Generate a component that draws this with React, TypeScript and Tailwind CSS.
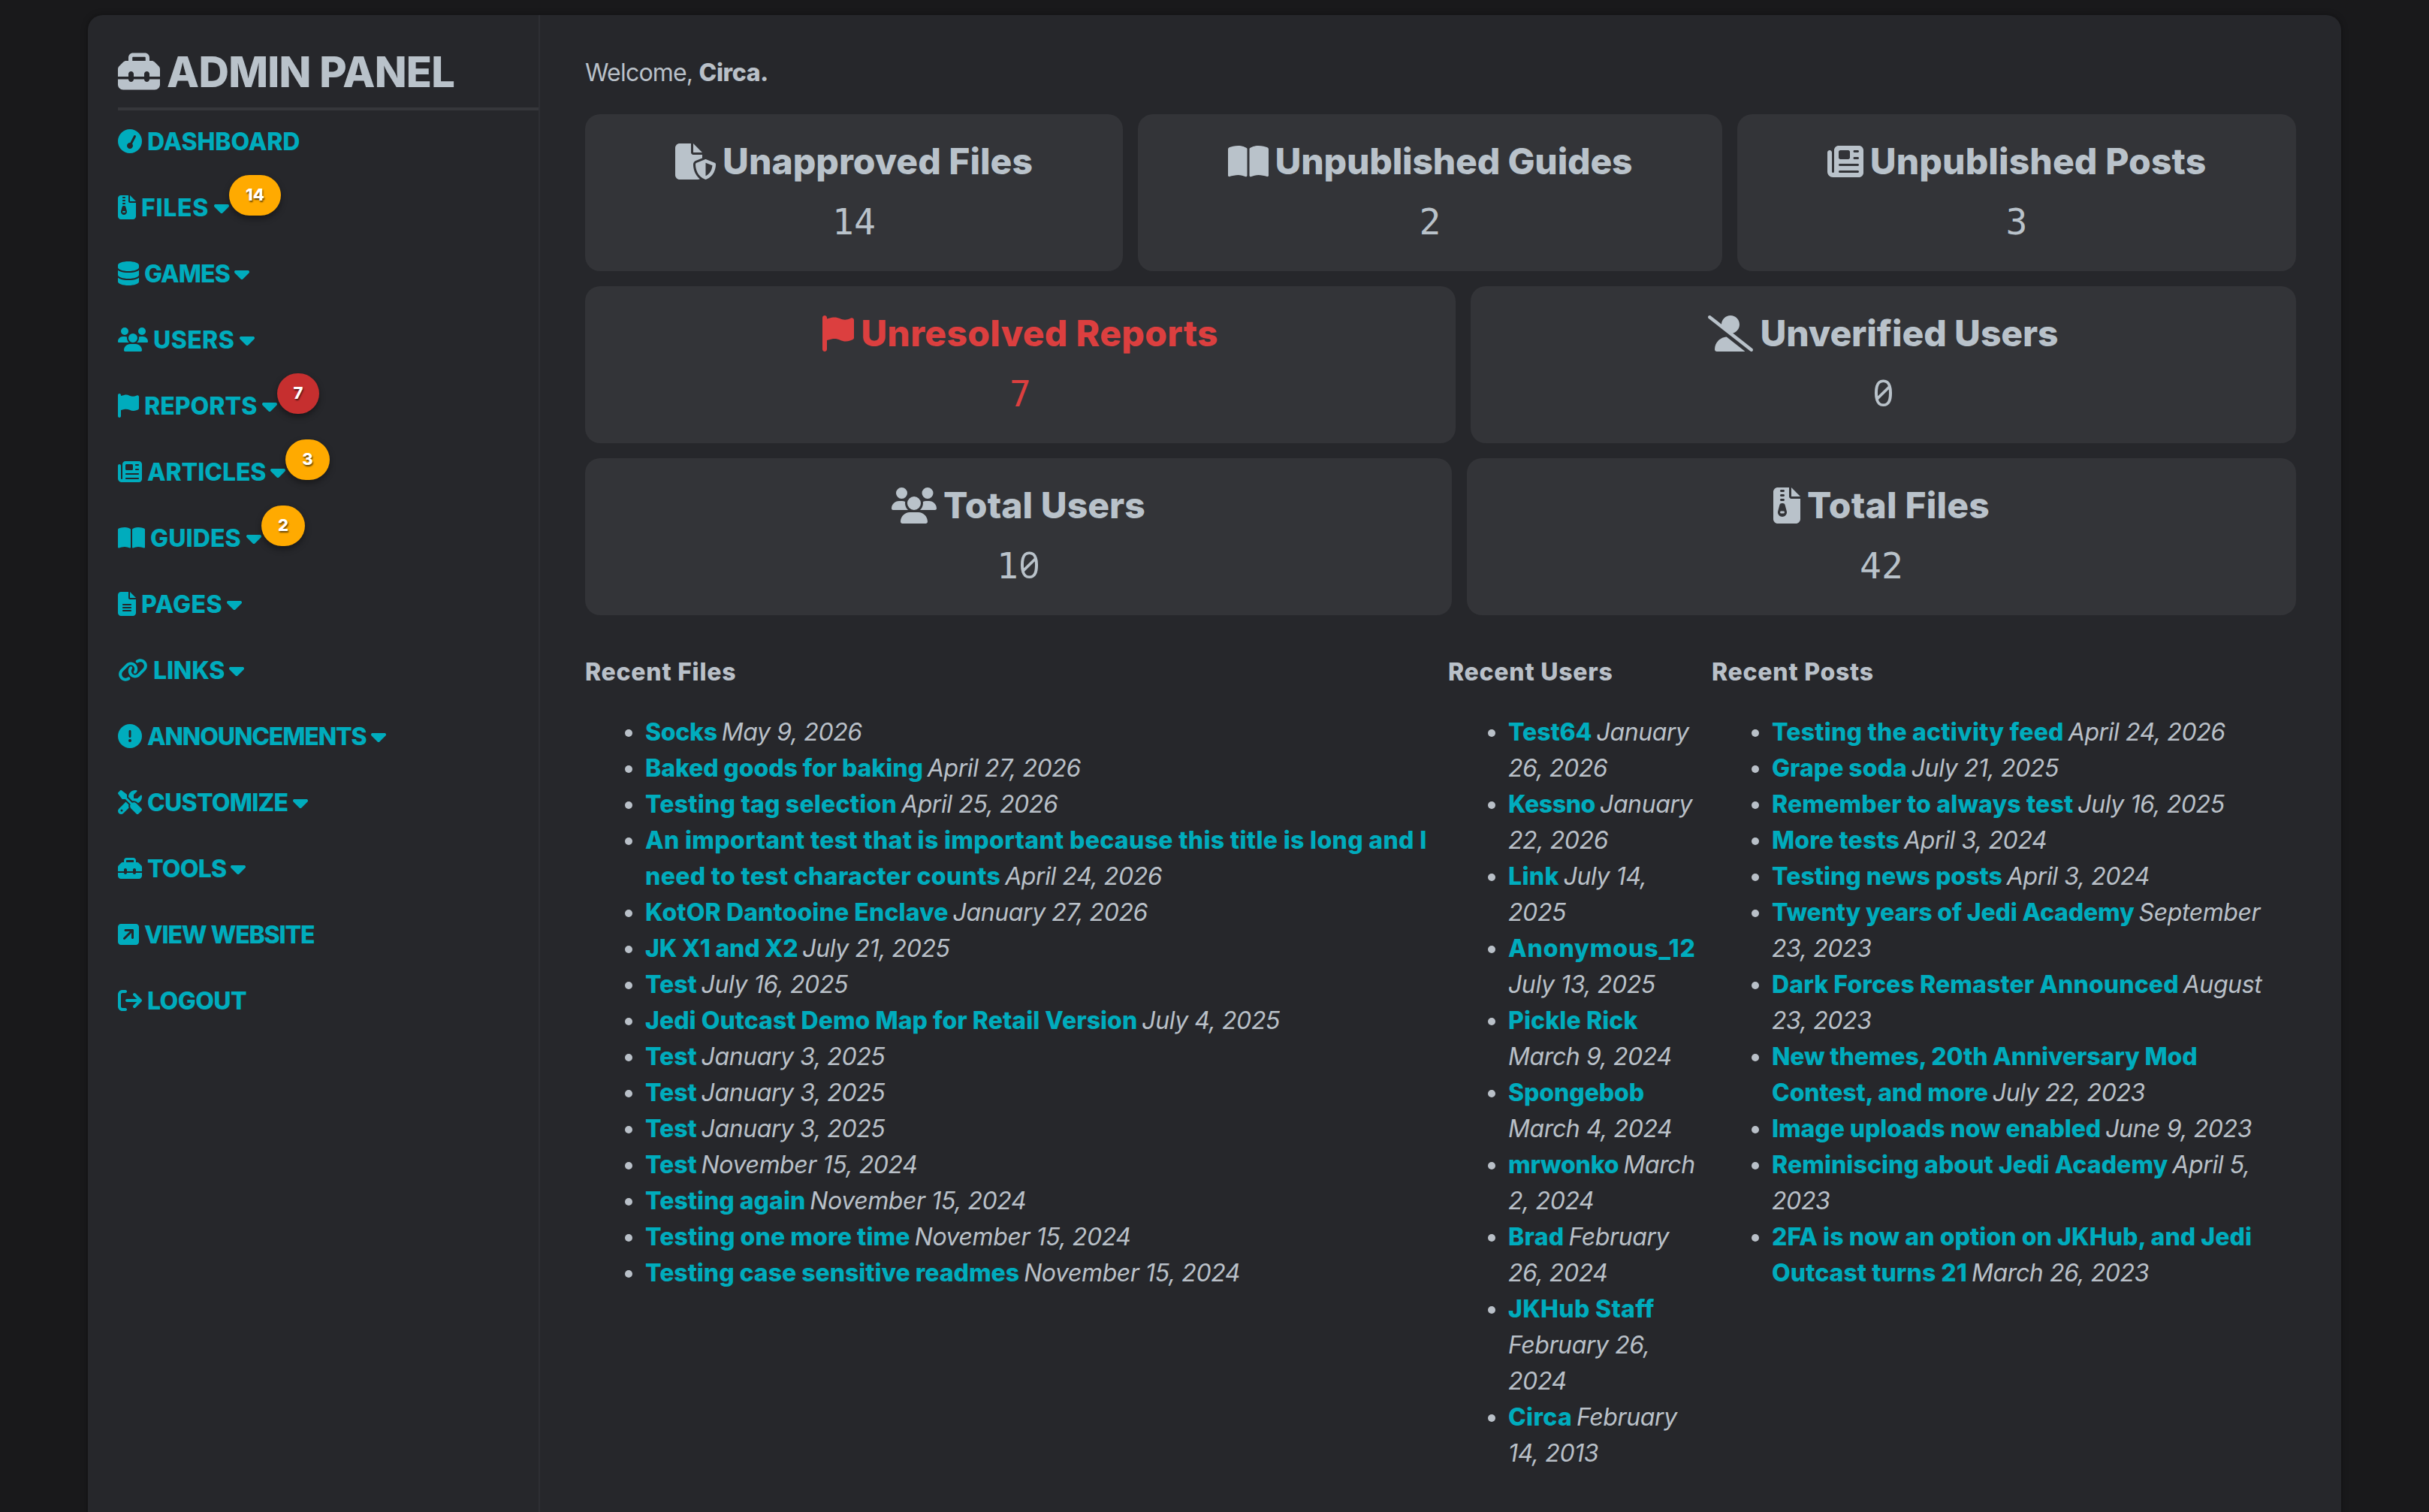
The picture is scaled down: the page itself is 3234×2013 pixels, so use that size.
import type { IconType } from "react-icons";
import clsx from "clsx";
import {
  FaArrowRightFromBracket,
  FaBookOpen,
  FaCaretDown,
  FaCircleExclamation,
  FaDatabase,
  FaFileLines,
  FaFileShield,
  FaFileZipper,
  FaFlag,
  FaGaugeSimpleHigh,
  FaLink,
  FaNewspaper,
  FaScrewdriverWrench,
  FaSquareArrowUpRight,
  FaToolbox,
  FaUserSlash,
  FaUsers,
} from "react-icons/fa6";

/** An icon and the class for its natural width relative to its height. */
type Glyph = [IconType, string];

type NavItem = {
  label: string;
  glyph: Glyph;
  /** Label width and letter spacing. */
  fit: string;
  menu?: boolean;
  badge?: { count: number; style: string };
};

const NAV: NavItem[] = [
  { label: "Dashboard", glyph: [FaGaugeSimpleHigh, "w-[1em]"], fit: "w-[208px] tracking-[-0.1px]" },
  { label: "Files", glyph: [FaFileZipper, "w-[0.75em]"], fit: "w-[92px] tracking-[0.7px]", menu: true, badge: { count: 14, style: "w-[69px] bg-[#ffaa00]" } },
  { label: "Games", glyph: [FaDatabase, "w-[0.875em]"], fit: "w-[115px] tracking-[-0.9px]", menu: true },
  { label: "Users", glyph: [FaUsers, "w-[1.25em]"], fit: "w-[110px] tracking-[0.4px]", menu: true },
  { label: "Reports", glyph: [FaFlag, "w-[0.875em]"], fit: "w-[152px]", menu: true, badge: { count: 7, style: "w-[56px] bg-[#c62f2f]" } },
  { label: "Articles", glyph: [FaNewspaper, "w-[1em]"], fit: "w-[159px] tracking-[-0.1px]", menu: true, badge: { count: 3, style: "w-[59px] bg-[#ffaa00]" } },
  { label: "Guides", glyph: [FaBookOpen, "w-[1.125em]"], fit: "w-[123px] tracking-[0.1px]", menu: true, badge: { count: 2, style: "w-[58px] bg-[#ffaa00]" } },
  { label: "Pages", glyph: [FaFileLines, "w-[0.75em]"], fit: "w-[109px] tracking-[0.4px]", menu: true },
  { label: "Links", glyph: [FaLink, "w-[1.25em]"], fit: "w-[96px] tracking-[-0.2px]", menu: true },
  { label: "Announcements", glyph: [FaCircleExclamation, "w-[1em]"], fit: "w-[293px] tracking-[-1.15px]", menu: true },
  { label: "Customize", glyph: [FaScrewdriverWrench, "w-[1em]"], fit: "w-[189px] tracking-[-0.75px]", menu: true },
  { label: "Tools", glyph: [FaToolbox, "w-[1em]"], fit: "w-[106px] tracking-[-0.8px]", menu: true },
  { label: "View Website", glyph: [FaSquareArrowUpRight, "w-[0.875em]"], fit: "w-[230px] tracking-[-1.15px]" },
  { label: "Logout", glyph: [FaArrowRightFromBracket, "w-[1em]"], fit: "w-[140px] tracking-[-0.6px]" },
];

type Stat = { label: string; value: string; glyph: Glyph; width: string; tracking: string; alert?: boolean };

const STATS: Stat[][] = [
  [
    { label: "Unapproved Files", value: "14", glyph: [FaFileShield, "w-[1.125em]"], width: "w-[716px]", tracking: "tracking-[0px]" },
    { label: "Unpublished Guides", value: "2", glyph: [FaBookOpen, "w-[1.125em]"], width: "w-[778px]", tracking: "tracking-[-0.2px]" },
    { label: "Unpublished Posts", value: "3", glyph: [FaNewspaper, "w-[1em]"], width: "flex-1", tracking: "tracking-[0.1px]" },
  ],
  [
    { label: "Unresolved Reports", value: "7", glyph: [FaFlag, "w-[0.875em]"], width: "w-[1159px]", tracking: "tracking-[0.3px]", alert: true },
    { label: "Unverified Users", value: "0", glyph: [FaUserSlash, "w-[1.25em]"], width: "flex-1", tracking: "tracking-[-0.1px]" },
  ],
  [
    { label: "Total Users", value: "10", glyph: [FaUsers, "w-[1.25em]"], width: "w-[1154px]", tracking: "tracking-[0.05px]" },
    { label: "Total Files", value: "42", glyph: [FaFileZipper, "w-[0.75em]"], width: "flex-1", tracking: "tracking-[0.2px]" },
  ],
];

type Entry = [title: string, date: string, titleTracking?: string];

const FEEDS: { heading: string; width: string; entries: Entry[] }[] = [
  {
    heading: "Recent Files",
    width: "w-[1149px]",
    entries: [
      ["Socks", "May 9, 2026", "tracking-[-0.3px]"],
      ["Baked goods for baking", "April 27, 2026"],
      ["Testing tag selection", "April 25, 2026", "tracking-[0.2px]"],
      [
        "An important test that is important because this title is long and I\nneed to test character counts",
        "April 24, 2026",
        "tracking-[0.32px]",
      ],
      ["KotOR Dantooine Enclave", "January 27, 2026", "tracking-[0.1px]"],
      ["JK X1 and X2", "July 21, 2025", "tracking-[-0.25px]"],
      ["Test", "July 16, 2025"],
      ["Jedi Outcast Demo Map for Retail Version", "July 4, 2025", "tracking-[0.02px]"],
      ["Test", "January 3, 2025"],
      ["Test", "January 3, 2025"],
      ["Test", "January 3, 2025"],
      ["Test", "November 15, 2024"],
      ["Testing again", "November 15, 2024", "tracking-[0px]"],
      ["Testing one more time", "November 15, 2024", "tracking-[0.1px]"],
      ["Testing case sensitive readmes", "November 15, 2024", "tracking-[-0.03px]"],
    ],
  },
  {
    heading: "Recent Users",
    width: "w-[351px]",
    entries: [
      ["Test64", "January\n26, 2026"],
      ["Kessno", "January\n22, 2026", "tracking-[-0.4px]"],
      ["Link", "July 14,\n2025", "tracking-[0.3px]"],
      ["Anonymous_12\n", "July 13, 2025", "tracking-[0.9px]"],
      ["Pickle Rick\n", "March 9, 2024", "tracking-[0.1px]"],
      ["Spongebob\n", "March 4, 2024"],
      ["mrwonko", "March\n2, 2024", "tracking-[-0.2px]"],
      ["Brad", "February\n26, 2024", "tracking-[0.3px]"],
      ["JKHub Staff\n", "February 26,\n2024", "tracking-[0.3px]"],
      ["Circa", "February\n14, 2013", "tracking-[0.3px]"],
    ],
  },
  {
    heading: "Recent Posts",
    width: "w-[778px]",
    entries: [
      ["Testing the activity feed", "April 24, 2026", "tracking-[0.2px]"],
      ["Grape soda", "July 21, 2025", "tracking-[0px]"],
      ["Remember to always test", "July 16, 2025", "tracking-[0.15px]"],
      ["More tests", "April 3, 2024", "tracking-[0.15px]"],
      ["Testing news posts", "April 3, 2024", "tracking-[0px]"],
      ["Twenty years of Jedi Academy", "September\n23, 2023", "tracking-[-0.17px]"],
      ["Dark Forces Remaster Announced", "August\n23, 2023", "tracking-[0.1px]"],
      ["New themes, 20th Anniversary Mod\nContest, and more", "July 22, 2023", "tracking-[-0.15px]"],
      ["Image uploads now enabled", "June 9, 2023"],
      ["Reminiscing about Jedi Academy", "April 5,\n2023", "tracking-[0.05px]"],
      ["2FA is now an option on JKHub, and Jedi\nOutcast turns 21", "March 26, 2023", "tracking-[0.06px]"],
    ],
  },
];

function NavLink({ label, glyph: [Icon, iconWidth], fit, menu, badge }: NavItem) {
  return (
    <li>
      <a href="#" className="flex h-12 items-center text-[#00acbd]">
        <Icon className={clsx("mr-1.5 h-[1em] shrink-0", iconWidth)} />
        <span className={clsx("shrink-0 pt-px pl-px font-extrabold whitespace-nowrap uppercase", fit)}>{label}</span>
        {menu && <FaCaretDown className="ml-1.5 h-[1em] w-[0.625em] shrink-0" />}
        {badge && (
          <span
            className={clsx(
              "relative -top-4 flex h-[54px] shrink-0 items-center justify-center rounded-[27px] pb-0.5 text-[22px] leading-none font-extrabold text-white shadow-[0_4px_8px_rgba(0,0,0,0.4)] [text-shadow:1px_2px_2px_rgba(0,0,0,0.6)]",
              badge.style,
            )}
          >
            {badge.count}
          </span>
        )}
      </a>
    </li>
  );
}

/** Monospaced figure with a slashed zero. */
function Figure({ value }: { value: string }) {
  return (
    <div className="mt-2 h-[72px] text-center font-['DejaVu_Sans_Mono',monospace] text-[48px] leading-[72px]">
      {value.split("").map((digit, i) =>
        digit === "0" ? (
          <span
            key={i}
            className="inline-block w-[29px] text-center font-['Open_Sans',sans-serif] text-[49px] leading-none [font-feature-settings:'zero']"
          >
            0
          </span>
        ) : (
          <span key={i}>{digit}</span>
        ),
      )}
    </div>
  );
}

function StatCard({ label, value, glyph: [Icon, iconWidth], width, tracking, alert }: Stat) {
  return (
    <div className={clsx("h-[209px] rounded-[20px] bg-[#333438] pt-[27px]", width, alert ? "text-[#dc3f3f]" : "text-[#b9c2ca]")}>
      <h2 className={clsx("flex h-[72px] items-center justify-center text-[48px] font-extrabold whitespace-nowrap", tracking)}>
        <Icon className={clsx("mr-[9px] h-[1em] shrink-0", iconWidth)} />
        {label}
      </h2>
      <Figure value={value} />
    </div>
  );
}

export default function App() {
  return (
    <div className="h-[2013px] overflow-hidden bg-[#19191b] pt-5 pr-[117px] pl-[117px] font-['Inter',sans-serif] text-[32px] leading-[48px] text-[#b9c0c8]">
      <div className="flex h-[2033px] rounded-[20px] bg-[#26272b] shadow-[0_0_8px_rgba(0,0,0,0.35)]">
        <aside className="w-[602px] shrink-0 border-r-2 border-[#2e2f34] pl-10">
          <div className="border-b-4 border-[#36373b] pt-9 pb-[7px]">
            <h1 className="flex h-20 items-center text-[56px] font-extrabold tracking-[-0.7px] whitespace-nowrap text-[#b9c2ca] uppercase">
              <FaToolbox className="mr-[9px] mb-[3px] h-14 w-14 shrink-0" />
              Admin Panel
            </h1>
          </div>
          <ul className="mt-[17px] flex flex-col gap-10">
            {NAV.map((item) => (
              <NavLink key={item.label} {...item} />
            ))}
          </ul>
        </aside>

        <main className="flex-1 px-[60px] pt-[53px]">
          <p>
            <span className="tracking-[-0.8px]">Welcome, </span>
            <strong className="font-extrabold tracking-[-0.4px]">Circa.</strong>
          </p>

          <section className="mt-[31px] flex flex-col gap-5">
            {STATS.map((row) => (
              <div key={row[0].label} className="flex gap-5">
                {row.map((stat) => (
                  <StatCard key={stat.label} {...stat} />
                ))}
              </div>
            ))}
          </section>

          <section className="mt-[52px] flex">
            {FEEDS.map(({ heading, width, entries }) => (
              <div key={heading} className={clsx("shrink-0", width)}>
                <h3 className="font-extrabold tracking-[0.75px]">{heading}</h3>
                <ul className="mt-8 pl-20">
                  {entries.map(([title, date, tracking], i) => (
                    <li
                      key={i}
                      className="relative whitespace-pre before:absolute before:top-5 before:-left-[27px] before:size-2.5 before:rounded-full before:bg-[#b9c0c8]"
                    >
                      <a href="#" className={clsx("font-extrabold text-[#00acbd]", tracking ?? "tracking-[-0.1px]")}>
                        {title}
                      </a>
                      <em className={clsx("tracking-[-0.4px] italic", !title.endsWith("\n") && "ml-1.5")}>{date}</em>
                    </li>
                  ))}
                </ul>
              </div>
            ))}
          </section>
        </main>
      </div>
    </div>
  );
}
